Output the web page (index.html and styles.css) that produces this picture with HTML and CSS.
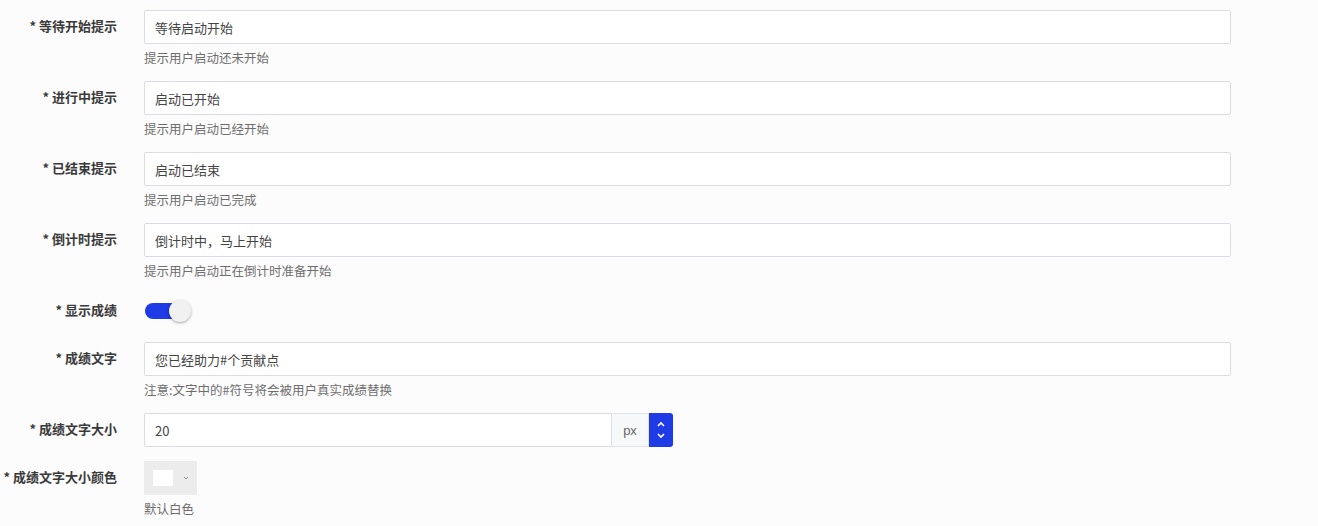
FILE: index.html
```html
<!DOCTYPE html>
<html lang="zh-CN">
<head>
  <meta charset="UTF-8">
  <title>启动设置</title>
  <link rel="stylesheet" href="styles.css">
</head>
<body>

<form class="form">
  <div class="row">
    <label class="label">* 等待开始提示</label>
    <div class="field">
      <input class="input" type="text" value="等待启动开始">
      <div class="help">提示用户启动还未开始</div>
    </div>
  </div>

  <div class="row">
    <label class="label">* 进行中提示</label>
    <div class="field">
      <input class="input" type="text" value="启动已开始">
      <div class="help">提示用户启动已经开始</div>
    </div>
  </div>

  <div class="row">
    <label class="label">* 已结束提示</label>
    <div class="field">
      <input class="input" type="text" value="启动已结束">
      <div class="help">提示用户启动已完成</div>
    </div>
  </div>

  <div class="row">
    <label class="label">* 倒计时提示</label>
    <div class="field">
      <input class="input" type="text" value="倒计时中，马上开始">
      <div class="help">提示用户启动正在倒计时准备开始</div>
    </div>
  </div>

  <div class="row">
    <label class="label">* 显示成绩</label>
    <div class="field">
      <div class="switch-box">
        <span class="switch on"><span class="knob"></span></span>
      </div>
    </div>
  </div>

  <div class="row">
    <label class="label">* 成绩文字</label>
    <div class="field">
      <input class="input" type="text" value="您已经助力#个贡献点">
      <div class="help">注意:文字中的#符号将会被用户真实成绩替换</div>
    </div>
  </div>

  <div class="row">
    <label class="label">* 成绩文字大小</label>
    <div class="field">
      <div class="number-group">
        <input class="input number" type="text" value="20">
        <span class="addon">px</span>
        <span class="spinner">
          <svg width="10" height="6" viewBox="0 0 10 6"><path d="M2 5 L5 2 L8 5" fill="none" stroke="#fff" stroke-width="1.6"/></svg>
          <svg width="10" height="6" viewBox="0 0 10 6"><path d="M2 1 L5 4 L8 1" fill="none" stroke="#fff" stroke-width="1.6"/></svg>
        </span>
      </div>
    </div>
  </div>

  <div class="row">
    <label class="label">* 成绩文字大小颜色</label>
    <div class="field">
      <div class="picker">
        <span class="swatch"></span>
        <svg width="6" height="4" viewBox="0 0 6 4"><path d="M1 1 L3 3 L5 1" fill="none" stroke="#888" stroke-width="1"/></svg>
      </div>
      <div class="help">默认白色</div>
    </div>
  </div>
</form>

</body>
</html>
```

FILE: styles.css
```css
* {
  box-sizing: border-box;
}

html, body {
  margin: 0;
  background: #fcfcfc;
  font-family: "Noto Sans CJK SC", "Liberation Sans", sans-serif;
  font-size: 13px;
  color: #333;
}

.form {
  padding-top: 10px;
  width: 1231px;
}

.row {
  display: flex;
  margin-bottom: 14px;
}

.label {
  width: 144px;
  flex: none;
  padding-right: 27px;
  text-align: right;
  font-weight: bold;
  color: #3a3a3a;
  line-height: 31px;
  white-space: nowrap;
}

.field {
  flex: 1;
}

.input {
  display: block;
  width: 100%;
  height: 34px;
  border: 1px solid #dddce4;
  border-radius: 2px;
  background: #fff;
  padding: 0 10px;
  font-family: inherit;
  font-size: 13px;
  color: #444;
  outline: none;
}

.help {
  margin-top: 5px;
  line-height: 18px;
  font-size: 12.5px;
  color: #6e6e6e;
}

.switch-box {
  height: 34px;
  display: flex;
  align-items: center;
}

.switch {
  position: relative;
  display: inline-block;
  width: 40px;
  height: 16px;
  margin-left: 1px;
  border-radius: 8px;
  background: #1e3be6;
}

.switch .knob {
  position: absolute;
  top: -3px;
  right: -6px;
  width: 22px;
  height: 22px;
  border-radius: 50%;
  background: #f1f1f1;
  box-shadow: 0 1px 3px rgba(0, 0, 0, 0.35);
}

.number-group {
  display: flex;
  height: 34px;
}

.input.number {
  width: 468px;
  border-radius: 2px 0 0 2px;
}

.addon {
  width: 37px;
  border: 1px solid #e3e3e8;
  border-left: none;
  background: #f7f8fa;
  color: #666;
  display: flex;
  align-items: center;
  justify-content: center;
  font-family: "Liberation Sans", sans-serif;
  font-size: 13px;
}

.spinner {
  width: 24px;
  background: #1e3be6;
  border-radius: 0 3px 3px 0;
  display: flex;
  flex-direction: column;
  align-items: center;
  justify-content: center;
  gap: 6px;
}

.picker {
  width: 53px;
  height: 34px;
  background: #ececec;
  display: flex;
  align-items: center;
  padding-left: 9px;
  gap: 10px;
}

.swatch {
  width: 20px;
  height: 16px;
  background: #fff;
}
```
